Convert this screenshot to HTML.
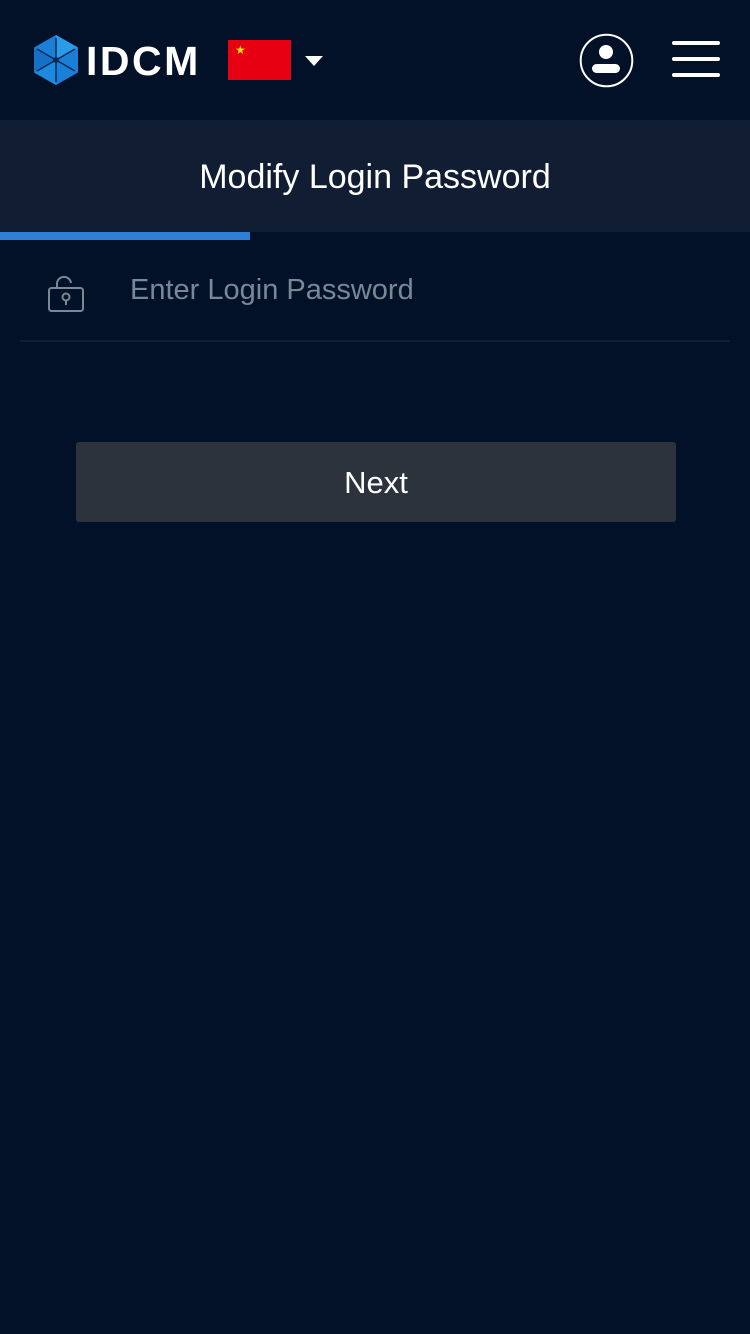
<!DOCTYPE html>
<html><head><meta charset="utf-8"><style>
body{margin:0;width:750px;height:1334px;background:#021128;font-family:"Liberation Sans",sans-serif;position:relative;overflow:hidden}
.a{position:absolute}
</style></head><body>
<svg class="a" style="left:33px;top:35px" width="46" height="50" viewBox="0 0 46 50">
<polygon points="23,0 45,12.5 45,37.5 23,50 1,37.5 1,12.5" fill="#1a7fd6"/>
<polygon points="23,0 45,12.5 23,25" fill="#2a9be8"/>
<polygon points="1,37.5 23,50 23,25" fill="#1b8ae0"/>
<polygon points="1,12.5 1,37.5 23,25" fill="#1570c6"/>
<path d="M23 3 L23 47 M4 14 L42 36 M4 36 L42 14" stroke="#0b2a55" stroke-width="1.5"/>
<circle cx="23" cy="25" r="3" fill="#0b2a55"/>
</svg>
<div class="a" style="left:86px;top:37px;color:#fff;font-size:41px;font-weight:bold;line-height:48px;letter-spacing:2.5px">IDCM</div>
<div class="a" style="left:228px;top:40px;width:63px;height:40px;background:#e60012"></div>
<div class="a" style="left:235px;top:43px;color:#ffde00;font-size:12px">★</div>
<div class="a" style="left:305px;top:56px;width:0;height:0;border-left:9px solid transparent;border-right:9px solid transparent;border-top:10px solid #fff"></div>
<svg class="a" style="left:579px;top:33px" width="55" height="55" viewBox="0 0 55 55">
<circle cx="27.5" cy="27.5" r="25.8" fill="none" stroke="#fff" stroke-width="2"/>
<circle cx="27" cy="19" r="7" fill="#fff"/>
<rect x="13" y="31" width="28" height="9" rx="4.5" fill="#fff"/>
</svg>
<div class="a" style="left:672px;top:41px;width:48px;height:4px;background:#fff;border-radius:2px"></div>
<div class="a" style="left:672px;top:57px;width:48px;height:4px;background:#fff;border-radius:2px"></div>
<div class="a" style="left:672px;top:73px;width:48px;height:4px;background:#fff;border-radius:2px"></div>
<div class="a" style="left:0;top:120px;width:750px;height:112px;background:#111d33;color:#fff;font-size:34px;text-align:center;line-height:114px">Modify Login Password</div>
<div class="a" style="left:0;top:232px;width:250px;height:8px;background:#2e7fd5"></div>
<svg class="a" style="left:46px;top:274px" width="40" height="40" viewBox="0 0 40 40">
<g fill="none" stroke="#7a8796" stroke-width="2">
<path d="M11 14 V11 A7 7 0 0 1 25 9"/>
<rect x="3" y="14" width="34" height="23" rx="2.5"/>
<circle cx="20" cy="23" r="3.5"/><path d="M20 26.5 V31"/>
</g></svg>
<div class="a" style="left:130px;top:272px;color:#7a8796;font-size:29px;line-height:36px">Enter Login Password</div>
<div class="a" style="left:20px;top:340px;width:710px;height:2px;background:#121f33"></div>
<div class="a" style="left:76px;top:442px;width:600px;height:80px;background:#2d333d;border-radius:3px;color:#fff;font-size:31px;text-align:center;line-height:82px">Next</div>
</body></html>
